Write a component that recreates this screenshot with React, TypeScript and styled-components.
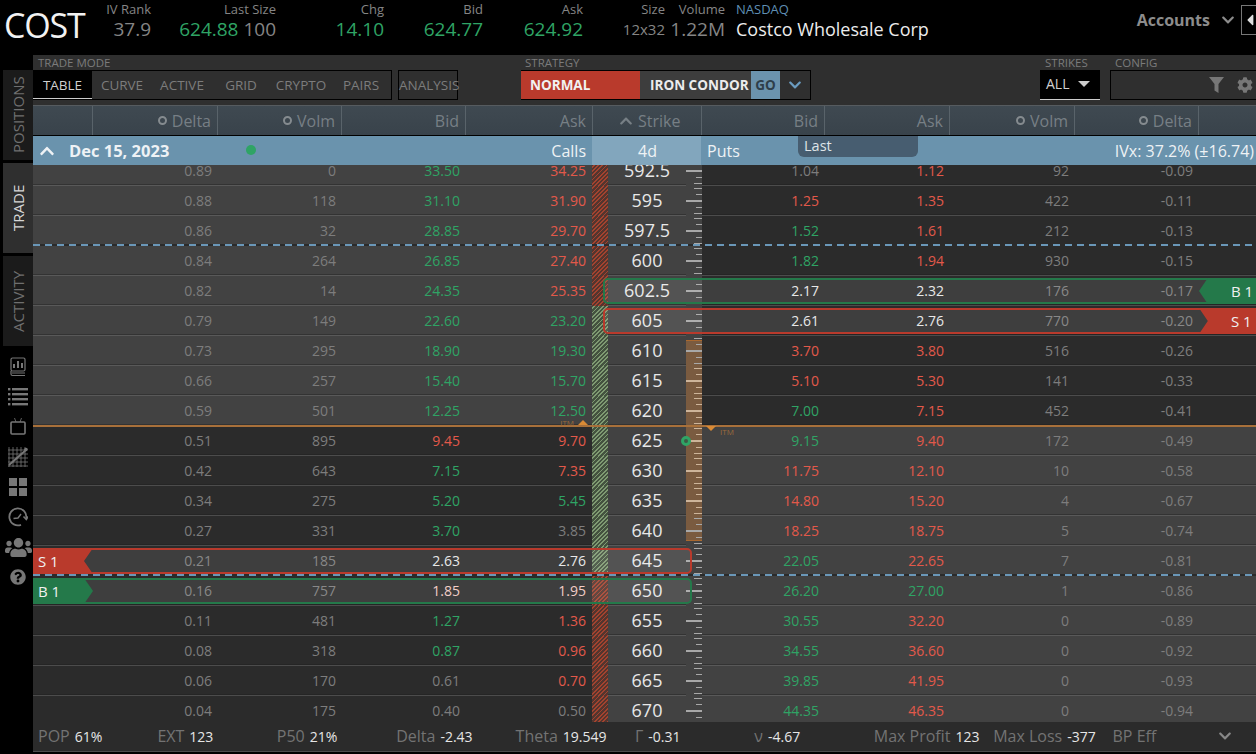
import React from "react";
import styled, { createGlobalStyle } from "styled-components";
import { FaChevronDown, FaChevronUp, FaCog, FaQuestionCircle, FaUsers, FaCaretLeft } from "react-icons/fa";

const FONT = `"Liberation Sans Narrow", "Open Sans", "Noto Sans", sans-serif`;
const GREEN = "#2fa465";
const RED = "#e2594a";
const GRAY = "#7d7d7d";
const WHITE = "#e6e6e6";
const PINK = "#f0c9c2";
const COLS = "60px 125px 124px 124px 126px 16px 78px 16px 123px 125px 125px 124px 57px";

const GlobalStyle = createGlobalStyle`
  html, body {
    margin: 0;
    padding: 0;
    background: #000;
    overflow: hidden;
  }
  * { box-sizing: border-box; }
  body { font-family: ${FONT}; }
`;

const Page = styled.div`
  width: 1256px;
  height: 754px;
  display: flex;
  flex-direction: column;
  background: #000;
  overflow: hidden;
`;

/* top quote strip */
const Quote = styled.div`
  height: 55px;
  flex: none;
  display: flex;
  align-items: flex-start;
`;

const Symbol = styled.div`
  width: 86px;
  padding: 5px 0 0 4px;
  font-size: 34px;
  line-height: 40px;
  font-family: "Open Sans", sans-serif;
  color: #f2f2f2;
  letter-spacing: -1.2px;
`;

const QuoteItem = styled.div<{ $w: number }>`
  width: ${(p) => p.$w}px;
  flex: none;
  text-align: right;
  padding-top: 1px;
`;

const QuoteLabel = styled.div<{ $blue?: boolean }>`
  font-size: 13px;
  line-height: 16px;
  color: ${(p) => (p.$blue ? "#5f8fb4" : "#858585")};
`;

const QuoteValue = styled.div<{ $small?: boolean }>`
  font-size: ${(p) => (p.$small ? 15 : 19)}px;
  line-height: 22px;
  margin-top: 1px;
  color: #858585;
`;

const Up = styled.span`
  color: ${GREEN};
`;

const Company = styled.div`
  margin-left: 11px;
  text-align: left;
  padding-top: 1px;
  flex: 1;
`;

const CompanyName = styled.div`
  font-size: 18px;
  line-height: 22px;
  margin-top: 1px;
  color: #ececec;
`;

const Accounts = styled.div`
  display: flex;
  align-items: center;
  gap: 11px;
  height: 40px;
  font-size: 16px;
  font-weight: bold;
  color: #8c8c8c;
  svg { font-size: 14px; }
`;

const Collapse = styled.div`
  width: 15px;
  height: 30px;
  margin: 5px 0 0 6px;
  border: 1px solid #777;
  border-right: 0;
  display: flex;
  align-items: center;
  color: #ddd;
  font-size: 18px;
  svg { margin-left: 2px; }
`;

const Body = styled.div`
  flex: 1;
  display: flex;
  min-height: 0;
`;

/* left rail */
const Rail = styled.div`
  width: 33px;
  flex: none;
  padding-top: 15px;
  display: flex;
  flex-direction: column;
  align-items: flex-end;
`;

const RailTab = styled.div<{ $active?: boolean }>`
  width: 30px;
  height: 90px;
  margin-bottom: 3px;
  background: ${(p) => (p.$active ? "#2f2f2f" : "#1b1b1b")};
  color: ${(p) => (p.$active ? "#d6d6d6" : "#6f6f6f")};
  writing-mode: vertical-rl;
  transform: rotate(180deg);
  text-align: center;
  font-family: "Open Sans", sans-serif;
  font-size: 15px;
  line-height: 30px;
`;

const RailIcons = styled.div`
  width: 33px;
  margin-top: 3px;
  display: flex;
  flex-direction: column;
  align-items: center;
  color: #777;
`;

const RailIcon = styled.div`
  height: 30px;
  width: 33px;
  padding-left: 3px;
  display: flex;
  align-items: center;
  justify-content: center;
  font-size: 20px;
`;

const Main = styled.div`
  flex: 1;
  display: flex;
  flex-direction: column;
  min-width: 0;
`;

/* toolbar */
const Toolbar = styled.div`
  height: 50px;
  flex: none;
  background: #2f2f2f;
  display: flex;
  align-items: flex-start;
`;

const Field = styled.div<{ $w: number; $ml?: number }>`
  width: ${(p) => p.$w}px;
  margin-left: ${(p) => p.$ml ?? 0}px;
  flex: none;
`;

const FieldLabel = styled.div<{ $pl?: number }>`
  height: 15px;
  padding-left: ${(p) => p.$pl ?? 5}px;
  font-size: 11.5px;
  line-height: 16px;
  color: #7b7b7b;
`;

const Tabs = styled.div`
  display: flex;
  height: 30px;
  border: 1px solid #000;
  border-left: 0;
`;

const Tab = styled.div<{ $active?: boolean; $w: number }>`
  width: ${(p) => p.$w}px;
  text-align: center;
  font-size: 13.5px;
  line-height: 29px;
  color: ${(p) => (p.$active ? "#d0d0d0" : "#7c7c7c")};
  background: ${(p) => (p.$active ? "#000" : "transparent")};
  border-bottom: ${(p) => (p.$active ? "1px solid #ccc" : "0")};
`;

const StrategyBar = styled.div`
  display: flex;
  height: 30px;
  border: 1px solid #000;
  border-left: 0;
  font-size: 13.5px;
  font-weight: bold;
  line-height: 28px;
`;

const Normal = styled.div`
  width: 119px;
  background: #b93a2c;
  color: #f1f1f1;
  padding-left: 9px;
`;

const Condor = styled.div`
  width: 111px;
  background: #3d3d3d;
  color: #ececec;
  padding-left: 10px;
`;

const Go = styled.div`
  width: 29px;
  background: #6b93ae;
  color: #2e3e4a;
  text-align: center;
`;

const StrategyMenu = styled.div`
  width: 30px;
  display: flex;
  align-items: center;
  justify-content: center;
  color: #6b9cc0;
  font-size: 14px;
`;

const Select = styled.div`
  height: 30px;
  background: #000;
  border-bottom: 1px solid #ccc;
  display: flex;
  align-items: center;
  justify-content: space-between;
  padding: 0 10px 2px 6px;
  font-size: 14px;
  color: #d0d0d0;
`;

const Caret = styled.span`
  width: 0;
  height: 0;
  border-left: 6px solid transparent;
  border-right: 6px solid transparent;
  border-top: 6px solid #ccc;
`;

const ConfigBox = styled.div`
  height: 30px;
  border: 1px solid #000;
  border-right: 0;
  display: flex;
  align-items: center;
  justify-content: flex-end;
  gap: 13px;
  padding-right: 3px;
  color: #777;
  font-size: 16px;
`;

/* table */
const HeadRow = styled.div`
  height: 31px;
  flex: none;
  display: grid;
  grid-template-columns: ${COLS};
  background: linear-gradient(#3f4951, #39434b);
  border-top: 1px solid #565b5f;
  border-bottom: 1px solid #000;
`;

const HeadCell = styled.div<{ $plain?: boolean }>`
  display: flex;
  align-items: center;
  justify-content: flex-end;
  gap: 5px;
  padding-right: 6px;
  font-size: 16px;
  color: #777f85;
  border-right: ${(p) => (p.$plain ? "0" : "1px solid #59636a")};
`;

const HeadStrike = styled(HeadCell)`
  grid-column: span 3;
  justify-content: flex-start;
  padding-left: 26px;
  gap: 5px;
  border-left: 1px solid #59636a;
  svg { font-size: 14px; }
`;

const Ring = styled.span`
  width: 9px;
  height: 9px;
  border-radius: 50%;
  border: 2.5px solid #858b8f;
`;

const Expiry = styled.div`
  height: 29px;
  flex: none;
  position: relative;
  display: grid;
  grid-template-columns: 559px 109px 1fr;
  background: #6a93ad;
  color: #eef2f5;
  font-size: 16px;
`;

const ExpiryCalls = styled.div`
  display: flex;
  align-items: center;
  padding: 0 6px 0 6px;
`;

const ExpiryDate = styled.span`
  margin-left: 14px;
  font-weight: bold;
  font-size: 16.5px;
`;

const LiveDot = styled.span`
  width: 10px;
  height: 10px;
  margin-left: 77px;
  margin-top: -2px;
  border-radius: 50%;
  background: #2fa465;
`;

const ExpiryLabel = styled.span`
  margin-left: auto;
`;

const ExpiryStrike = styled.div`
  background: #82a6bd;
  display: flex;
  align-items: center;
  padding-left: 46px;
`;

const ExpiryPuts = styled.div`
  display: flex;
  align-items: center;
  justify-content: space-between;
  padding: 0 2px 0 6px;
`;

const LastTip = styled.div`
  position: absolute;
  top: 0;
  left: 765px;
  width: 120px;
  height: 21px;
  padding-left: 6px;
  background: #475d70;
  border-radius: 0 0 6px 6px;
  font-size: 14.5px;
  line-height: 20px;
  color: #dfe4e8;
`;

const Rows = styled.div`
  flex: 1;
  min-height: 0;
  overflow: hidden;
`;

const Row = styled.div<{ $first?: boolean; $itm?: boolean }>`
  position: relative;
  z-index: ${(p) => (p.$itm ? 2 : "auto")};
  height: 30px;
  margin-top: ${(p) => (p.$first ? -9 : 0)}px;
  display: grid;
  grid-template-columns: ${COLS};
  font-size: 14px;
`;

const Cell = styled.div<{ $lit: boolean; $color?: string }>`
  display: flex;
  align-items: center;
  justify-content: flex-end;
  padding-right: 6px;
  padding-bottom: 1px;
  background: ${(p) => (p.$lit ? "#424242" : "#2b2b2b")};
  color: ${(p) => p.$color ?? GRAY};
  border-bottom: 1px solid ${(p) => (p.$lit ? "#595959" : "#4c4c4c")};
  box-shadow: inset 0 -1px 0 ${(p) => (p.$lit ? "#333" : "#252525")};
`;

const Hatch = styled.div<{ $kind: "red" | "green" }>`
  background: ${(p) =>
    p.$kind === "red"
      ? "repeating-linear-gradient(-45deg, #a3432f 0 1.2px, #54352e 1.2px 3px)"
      : "repeating-linear-gradient(-45deg, #7f9a72 0 1.2px, #44523f 1.2px 3px)"};
`;

const StrikeCell = styled.div`
  display: flex;
  align-items: center;
  justify-content: center;
  padding-bottom: 1px;
  background: #424242;
  color: #e8e8e8;
  font-size: 18px;
  border-bottom: 1px solid #595959;
  box-shadow: inset 0 -1px 0 #333;
`;

const Ruler = styled.div<{ $fill?: "full" | "start" | "end" }>`
  position: relative;
  background: ${(p) =>
    p.$fill === "full"
      ? "#7a5b40"
      : p.$fill === "start"
        ? "linear-gradient(#424242 0 4px, #a9682f 4px 5px, #7a5b40 5px)"
        : p.$fill === "end"
          ? "linear-gradient(#7a5b40 0 24px, #a9682f 24px 25px, #424242 25px)"
          : "#424242"};
  color: ${(p) => (p.$fill === "full" ? "#cdb49a" : "#a8a8a8")};
  svg { display: block; }
`;

const PriceMark = styled.span`
  position: absolute;
  top: 10px;
  left: -5px;
  width: 10px;
  height: 10px;
  border-radius: 50%;
  border: 3px solid #2fa465;
  background: #3d5a45;
`;

const Dashed = styled.div`
  position: absolute;
  left: 0;
  right: 0;
  bottom: 0;
  height: 2px;
  background: repeating-linear-gradient(90deg, #6a97b8 0 7px, #2b2b2b 7px 12px);
`;

const ItmLine = styled.div`
  position: absolute;
  left: 0;
  right: 0;
  bottom: -1px;
  height: 2px;
  background: #a8703a;
`;

const ItmMark = styled.div<{ $side: "call" | "put" }>`
  position: absolute;
  display: flex;
  align-items: center;
  gap: 4px;
  font-size: 8px;
  color: #9c6a3c;
  ${(p) =>
    p.$side === "call"
      ? "right: 668px; bottom: -1px; height: 10px; align-items: flex-start;"
      : "left: 673px; top: 30px; height: 10px; align-items: flex-start;"}
`;

const ItmArrow = styled.span<{ $up?: boolean }>`
  width: 0;
  height: 0;
  border-left: 5px solid transparent;
  border-right: 5px solid transparent;
  ${(p) => (p.$up ? "border-bottom: 5px solid #d98a35; margin-top: 3px;" : "border-top: 5px solid #d98a35;")}
`;

const OrderBox = styled.div<{ $side: "call" | "put"; $sell: boolean }>`
  position: absolute;
  top: 2px;
  height: 26px;
  ${(p) => (p.$side === "call" ? "left: 0; width: 659px;" : "left: 570px; right: 0;")}
  border: 2px solid ${(p) => (p.$sell ? "#b93a2c" : "#24794a")};
  border-radius: ${(p) => (p.$side === "call" ? "0 5px 5px 0" : "5px 0 0 5px")};
  background: rgba(255, 255, 255, 0.09);
`;

const OrderTag = styled.div<{ $side: "call" | "put"; $sell: boolean }>`
  position: absolute;
  top: -2px;
  height: 26px;
  display: flex;
  align-items: center;
  font-family: "Open Sans", sans-serif;
  font-size: 15px;
  color: #f0f0f0;
  background: ${(p) => (p.$sell ? "#b93a2c" : "#24794a")};
  ${(p) => {
    if (p.$side === "call") {
      return `left: -2px; width: 60px; padding-left: 5px; clip-path: ${
        p.$sell
          ? "polygon(0 0, 100% 0, 85% 50%, 100% 100%, 0 100%)"
          : "polygon(0 0, 85% 0, 100% 50%, 85% 100%, 0 100%)"
      };`;
    }
    return `right: 0; width: 55px; padding-left: 32px; clip-path: ${
      p.$sell
        ? "polygon(0 0, 100% 0, 100% 100%, 0 100%, 16% 50%)"
        : "polygon(16% 0, 100% 0, 100% 100%, 16% 100%, 0 50%)"
    };`;
  }}
`;

/* bottom stats */
const Footer = styled.div`
  height: 30px;
  flex: none;
  display: grid;
  grid-template-columns: repeat(10, 119.4px) 1fr;
  align-items: center;
  background: #2b2b2b;
  border-bottom: 1px solid #4c4c4c;
  margin-bottom: 2px;
  padding: 0 0 1px 5px;
`;

const Stat = styled.div`
  display: flex;
  align-items: baseline;
  gap: 5px;
  font-size: 16px;
  color: #737373;
`;

const StatValue = styled.span`
  font-size: 14px;
  color: #e6e6e6;
`;

const FooterChevron = styled.div`
  margin-left: -14px;
  color: #888;
  font-size: 14px;
  display: flex;
`;

type Leg = { side: "call" | "put"; sell: boolean; label: string };

type Strike = {
  strike: string;
  delta: string;
  volm: string;
  bid: [string, string];
  ask: [string, string];
  pBid: [string, string];
  pAsk: [string, string];
  pVolm: string;
  pDelta: string;
  leg?: Leg;
};

const mk = (
  strike: string,
  delta: string,
  volm: string,
  bid: string,
  bc: string,
  ask: string,
  ac: string,
  pb: string,
  pbc: string,
  pa: string,
  pac: string,
  pVolm: string,
  pDelta: string,
  leg?: Leg,
): Strike => ({
  strike,
  delta,
  volm,
  bid: [bid, bc],
  ask: [ask, ac],
  pBid: [pb, pbc],
  pAsk: [pa, pac],
  pVolm,
  pDelta,
  leg,
});

const G = GREEN;
const R = RED;
const Y = GRAY;
const W = WHITE;

const strikes: Strike[] = [
  mk("592.5", "0.89", "0", "33.50", G, "34.25", R, "1.04", Y, "1.12", R, "92", "-0.09"),
  mk("595", "0.88", "118", "31.10", G, "31.90", R, "1.25", R, "1.35", R, "422", "-0.11"),
  mk("597.5", "0.86", "32", "28.85", G, "29.70", R, "1.52", G, "1.61", R, "212", "-0.13"),
  mk("600", "0.84", "264", "26.85", G, "27.40", R, "1.82", G, "1.94", R, "930", "-0.15"),
  mk("602.5", "0.82", "14", "24.35", G, "25.35", R, "2.17", W, "2.32", W, "176", "-0.17", { side: "put", sell: false, label: "B 1" }),
  mk("605", "0.79", "149", "22.60", G, "23.20", G, "2.61", W, "2.76", W, "770", "-0.20", { side: "put", sell: true, label: "S 1" }),
  mk("610", "0.73", "295", "18.90", G, "19.30", G, "3.70", R, "3.80", R, "516", "-0.26"),
  mk("615", "0.66", "257", "15.40", G, "15.70", G, "5.10", R, "5.30", R, "141", "-0.33"),
  mk("620", "0.59", "501", "12.25", G, "12.50", G, "7.00", G, "7.15", R, "452", "-0.41"),
  mk("625", "0.51", "895", "9.45", R, "9.70", R, "9.15", G, "9.40", R, "172", "-0.49"),
  mk("630", "0.42", "643", "7.15", G, "7.35", R, "11.75", R, "12.10", R, "10", "-0.58"),
  mk("635", "0.34", "275", "5.20", G, "5.45", G, "14.80", R, "15.20", R, "4", "-0.67"),
  mk("640", "0.27", "331", "3.70", G, "3.85", Y, "18.25", R, "18.75", R, "5", "-0.74"),
  mk("645", "0.21", "185", "2.63", W, "2.76", W, "22.05", G, "22.65", R, "7", "-0.81", { side: "call", sell: true, label: "S 1" }),
  mk("650", "0.16", "757", "1.85", PINK, "1.95", PINK, "26.20", G, "27.00", G, "1", "-0.86", { side: "call", sell: false, label: "B 1" }),
  mk("655", "0.11", "481", "1.27", G, "1.36", R, "30.55", G, "32.20", R, "0", "-0.89"),
  mk("660", "0.08", "318", "0.87", G, "0.96", R, "34.55", G, "36.60", R, "0", "-0.92"),
  mk("665", "0.06", "170", "0.61", Y, "0.70", R, "39.85", G, "41.95", R, "0", "-0.93"),
  mk("670", "0.04", "175", "0.40", Y, "0.50", Y, "44.35", G, "46.35", R, "0", "-0.94"),
];

const ITM_INDEX = 9;

const Ticks = () => (
  <svg width="16" height="30" viewBox="0 0 16 30" fill="currentColor">
    <rect x="8" y="2" width="8" height="1" />
    <rect x="10" y="8" width="6" height="1" />
    <rect x="0" y="14" width="16" height="2" />
    <rect x="10" y="21" width="6" height="1" />
    <rect x="8" y="27" width="8" height="1" />
  </svg>
);

const stats: [string, string][] = [
  ["POP", "61%"],
  ["EXT", "123"],
  ["P50", "21%"],
  ["Delta", "-2.43"],
  ["Theta", "19.549"],
  ["Γ", "-0.31"],
  ["ν", "-4.67"],
  ["Max Profit", "123"],
  ["Max Loss", "-377"],
  ["BP Eff", ""],
];

const BookIcon = () => (
  <svg width="16" height="20" viewBox="0 0 16 20" fill="none" stroke="currentColor" strokeWidth="1.2">
    <rect x="1" y="1" width="14" height="13" rx="1.5" />
    <path d="M1 14v3a1.5 1.5 0 0 0 1.5 1.5H15M2 16h13" />
    <path d="M4 11V7M8 11V4M12 11V6" strokeWidth="2" />
  </svg>
);

const ListIcon = () => (
  <svg width="20" height="18" viewBox="0 0 20 18" fill="currentColor">
    {[1, 6, 11, 16].map((y) => (
      <g key={y}>
        <rect x="0" y={y - 1} width="2.4" height="2.4" />
        <rect x="4" y={y - 1} width="16" height="2.4" />
      </g>
    ))}
  </svg>
);

const TvIcon = () => (
  <svg width="16" height="20" viewBox="0 0 16 20" fill="none" stroke="currentColor">
    <rect x="1" y="5" width="14" height="12" rx="1" strokeWidth="1.6" />
    <path d="M6 5L4.5 1M10 5l1.500-4" strokeWidth="0.8" />
  </svg>
);

const GridChartIcon = () => (
  <svg width="20" height="20" viewBox="0 0 20 20" fill="none" stroke="currentColor">
    <path d="M1 0v20M5 0v20M9 0v20M13 0v20M17 0v20M0 3h18M0 7h20M0 11h20M0 15h20M0 19h20" strokeWidth="0.8" />
    <path d="M1 18L18 3" strokeWidth="2" />
    <circle cx="18" cy="2.500" r="1.800" fill="currentColor" stroke="none" />
  </svg>
);

const TilesIcon = () => (
  <svg width="18" height="18" viewBox="0 0 18 18" fill="currentColor">
    <rect x="0" y="0" width="8" height="8" />
    <rect x="10" y="0" width="8" height="8" />
    <rect x="0" y="10" width="8" height="8" />
    <rect x="10" y="10" width="8" height="8" />
  </svg>
);

const ClockIcon = () => (
  <svg width="20" height="20" viewBox="0 0 20 20" fill="none" stroke="currentColor" strokeWidth="1.800">
    <path d="M13 17.800A8.500 8.500 0 1 1 18.300 11" />
    <path d="M15.500 9.500l2.800 3 2-3.200" strokeWidth="1.500" />
    <path d="M5.500 11.500L10 11l3-4" strokeWidth="1.400" />
  </svg>
);

const FunnelIcon = () => (
  <svg width="15" height="16" viewBox="0 0 15 16" fill="currentColor">
    <path d="M0 0h15L9.500 7v9l-4-2.500V7z" />
  </svg>
);

const App = () => {
  return (
    <Page>
      <GlobalStyle />
      <Quote>
        <Symbol>COST</Symbol>
        <QuoteItem $w={65}>
          <QuoteLabel>IV Rank</QuoteLabel>
          <QuoteValue>37.9</QuoteValue>
        </QuoteItem>
        <QuoteItem $w={125}>
          <QuoteLabel>Last Size</QuoteLabel>
          <QuoteValue>
            <Up>624.88</Up> 100
          </QuoteValue>
        </QuoteItem>
        <QuoteItem $w={108}>
          <QuoteLabel>Chg</QuoteLabel>
          <QuoteValue>
            <Up>14.10</Up>
          </QuoteValue>
        </QuoteItem>
        <QuoteItem $w={99}>
          <QuoteLabel>Bid</QuoteLabel>
          <QuoteValue>
            <Up>624.77</Up>
          </QuoteValue>
        </QuoteItem>
        <QuoteItem $w={100}>
          <QuoteLabel>Ask</QuoteLabel>
          <QuoteValue>
            <Up>624.92</Up>
          </QuoteValue>
        </QuoteItem>
        <QuoteItem $w={82}>
          <QuoteLabel>Size</QuoteLabel>
          <QuoteValue $small>12x32</QuoteValue>
        </QuoteItem>
        <QuoteItem $w={60}>
          <QuoteLabel>Volume</QuoteLabel>
          <QuoteValue>1.22M</QuoteValue>
        </QuoteItem>
        <Company>
          <QuoteLabel $blue>NASDAQ</QuoteLabel>
          <CompanyName>Costco Wholesale Corp</CompanyName>
        </Company>
        <Accounts>
          Accounts
          <FaChevronDown />
        </Accounts>
        <Collapse>
          <FaCaretLeft />
        </Collapse>
      </Quote>

      <Body>
        <Rail>
          <RailTab>POSITIONS</RailTab>
          <RailTab $active>TRADE</RailTab>
          <RailTab>ACTIVITY</RailTab>
          <RailIcons>
            <RailIcon>
              <BookIcon />
            </RailIcon>
            <RailIcon>
              <ListIcon />
            </RailIcon>
            <RailIcon>
              <TvIcon />
            </RailIcon>
            <RailIcon>
              <GridChartIcon />
            </RailIcon>
            <RailIcon>
              <TilesIcon />
            </RailIcon>
            <RailIcon>
              <ClockIcon />
            </RailIcon>
            <RailIcon>
              <FaUsers style={{ fontSize: 27 }} />
            </RailIcon>
            <RailIcon>
              <FaQuestionCircle style={{ fontSize: 16 }} />
            </RailIcon>
          </RailIcons>
        </Rail>

        <Main>
          <Toolbar>
            <Field $w={359}>
              <FieldLabel>TRADE MODE</FieldLabel>
              <Tabs>
                <Tab $active $w={59}>
                  TABLE
                </Tab>
                <Tab $w={60}>CURVE</Tab>
                <Tab $w={60}>ACTIVE</Tab>
                <Tab $w={58}>GRID</Tab>
                <Tab $w={62}>CRYPTO</Tab>
                <Tab $w={58}>PAIRS</Tab>
              </Tabs>
            </Field>
            <Field $w={60} $ml={6}>
              <FieldLabel />
              <Tabs style={{ borderLeft: "1px solid #000" }}>
                <Tab $w={58}>ANALYSIS</Tab>
              </Tabs>
            </Field>
            <Field $w={290} $ml={63}>
              <FieldLabel $pl={4}>STRATEGY</FieldLabel>
              <StrategyBar>
                <Normal>NORMAL</Normal>
                <Condor>IRON CONDOR</Condor>
                <Go>GO</Go>
                <StrategyMenu>
                  <FaChevronDown />
                </StrategyMenu>
              </StrategyBar>
            </Field>
            <Field $w={60} $ml={229}>
              <FieldLabel>STRIKES</FieldLabel>
              <Select>
                ALL
                <Caret />
              </Select>
            </Field>
            <Field $w={146} $ml={10}>
              <FieldLabel>CONFIG</FieldLabel>
              <ConfigBox>
                <FunnelIcon />
                <FaCog />
              </ConfigBox>
            </Field>
          </Toolbar>

          <HeadRow>
            <HeadCell />
            <HeadCell>
              <Ring />
              Delta
            </HeadCell>
            <HeadCell>
              <Ring />
              Volm
            </HeadCell>
            <HeadCell>Bid</HeadCell>
            <HeadCell $plain>Ask</HeadCell>
            <HeadStrike>
              <FaChevronUp />
              Strike
            </HeadStrike>
            <HeadCell>Bid</HeadCell>
            <HeadCell>Ask</HeadCell>
            <HeadCell>
              <Ring />
              Volm
            </HeadCell>
            <HeadCell>
              <Ring />
              Delta
            </HeadCell>
            <HeadCell $plain />
          </HeadRow>

          <Expiry>
            <ExpiryCalls>
              <FaChevronUp />
              <ExpiryDate>Dec 15, 2023</ExpiryDate>
              <LiveDot />
              <ExpiryLabel>Calls</ExpiryLabel>
            </ExpiryCalls>
            <ExpiryStrike>4d</ExpiryStrike>
            <ExpiryPuts>
              <span>Puts</span>
              <span>IVx: 37.2% (±16.74)</span>
            </ExpiryPuts>
            <LastTip>Last</LastTip>
          </Expiry>

          <Rows>
            {strikes.map((s, i) => {
              const callLit = i < ITM_INDEX;
              const putLit = !callLit;
              const hatchKind = i <= 4 || i >= 14 ? "red" : "green";
              const fill = i === 6 ? "start" : i === 12 ? "end" : i > 6 && i < 12 ? "full" : undefined;
              return (
                <Row key={s.strike} $first={i === 0} $itm={i === ITM_INDEX - 1}>
                  <Cell $lit={callLit} />
                  <Cell $lit={callLit}>{s.delta}</Cell>
                  <Cell $lit={callLit}>{s.volm}</Cell>
                  <Cell $lit={callLit} $color={s.bid[1]}>
                    {s.bid[0]}
                  </Cell>
                  <Cell $lit={callLit} $color={s.ask[1]}>
                    {s.ask[0]}
                  </Cell>
                  <Hatch $kind={hatchKind} />
                  <StrikeCell>{s.strike}</StrikeCell>
                  <Ruler $fill={fill}>
                    <Ticks />
                    {i === ITM_INDEX && <PriceMark />}
                  </Ruler>
                  <Cell $lit={putLit} $color={s.pBid[1]}>
                    {s.pBid[0]}
                  </Cell>
                  <Cell $lit={putLit} $color={s.pAsk[1]}>
                    {s.pAsk[0]}
                  </Cell>
                  <Cell $lit={putLit}>{s.pVolm}</Cell>
                  <Cell $lit={putLit}>{s.pDelta}</Cell>
                  <Cell $lit={putLit} />
                  {s.leg && (
                    <OrderBox $side={s.leg.side} $sell={s.leg.sell}>
                      <OrderTag $side={s.leg.side} $sell={s.leg.sell}>
                        {s.leg.label}
                      </OrderTag>
                    </OrderBox>
                  )}
                  {(i === 2 || i === 13) && <Dashed />}
                  {i === ITM_INDEX - 1 && (
                    <>
                      <ItmLine />
                      <ItmMark $side="call">
                        ITM
                        <ItmArrow $up />
                      </ItmMark>
                      <ItmMark $side="put">
                        <ItmArrow />
                        ITM
                      </ItmMark>
                    </>
                  )}
                </Row>
              );
            })}
          </Rows>

          <Footer>
            {stats.map(([label, value]) => (
              <Stat key={label}>
                {label}
                <StatValue>{value}</StatValue>
              </Stat>
            ))}
            <FooterChevron>
              <FaChevronDown />
            </FooterChevron>
          </Footer>
        </Main>
      </Body>
    </Page>
  );
};

export default App;
